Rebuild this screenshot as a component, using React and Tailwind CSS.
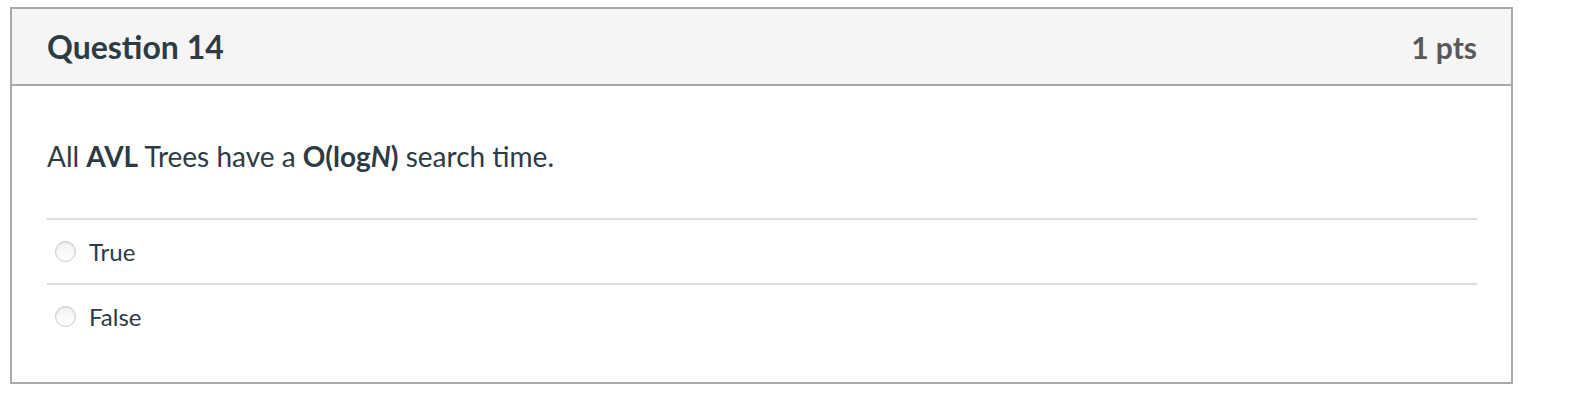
import React from "react";

function Radio() {
  return (
    <span className="inline-block w-[21px] h-[21px] rounded-full border border-[#c8c8c8] bg-gradient-to-b from-[#f2f2f2] to-white shadow-[inset_0_1px_2px_rgba(0,0,0,0.08)]" />
  );
}

function Option({ label, h }) {
  return (
    <div className={`${h} border-t-2 border-[#dedede] flex items-center pl-[8px]`}>
      <Radio />
      <span className="ml-[13px] text-[24px] text-[#2d3b45] leading-none">{label}</span>
    </div>
  );
}

export default function App() {
  return (
    <div className="pt-[7px] pl-[10px] bg-white" style={{ fontFamily: "Lato, 'Open Sans', sans-serif" }}>
      <div className="w-[1503px] border-2 border-[#a9a9a9] bg-white">
        <div className="h-[77px] bg-[#f5f5f5] border-b-2 border-[#a9a9a9] flex items-center justify-between pl-[35px] pr-[34px]">
          <div className="text-[32px] font-bold text-[#2d3b45] leading-none">Question 14</div>
          <div className="text-[30px] font-bold text-[#595959] leading-none">1 pts</div>
        </div>
        <div className="pl-[35px] pr-[34px] pt-[49px] pb-[34px]">
          <p className="text-[28px] leading-[42px] text-[#2d3b45]">
            All <strong className="font-bold">AVL</strong> Trees have a <strong className="font-bold">O(log<em>N</em>)</strong> search time.
          </p>
          <div className="mt-[41px]">
            <Option label="True" h="h-[65px]" />
            <Option label="False" h="h-[65px]" />
          </div>
        </div>
      </div>
    </div>
  );
}
